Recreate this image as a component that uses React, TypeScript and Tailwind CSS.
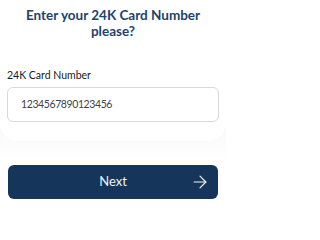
import { ArrowRight } from "lucide-react";

export default function App() {
  return (
    <div
      className="w-[226px] h-[214px] bg-white overflow-hidden"
      style={{ fontFamily: "Lato, 'Noto Sans', sans-serif" }}
    >
      <div className="bg-gradient-to-b from-[#e9e9e9] via-[#f3f3f3] to-white">
        {/* card */}
        <div className="bg-white rounded-b-[18px] px-[7px] pt-[7px] pb-[19px]">
          <h1 className="text-center text-[13.5px] leading-[16px] font-bold text-[#21436a]">
            Enter your 24K Card Number
            <br />
            please?
          </h1>
          <label className="block mt-[29px] text-[10.5px] leading-[14px] text-[#1a1a1a]">
            24K Card Number
          </label>
          <div className="mt-[5px] h-[35px] rounded-[6px] border border-[#d9d9d9] flex items-center px-[13px]">
            <span className="text-[10.5px] text-[#444] tracking-[-0.4px]">1234567890123456</span>
          </div>
        </div>
        <div className="h-[24px]" />
      </div>
      <div className="px-[8px]">
        <button className="w-full h-[34px] rounded-[6px] bg-[#15365a] text-[#f1f4f8] flex items-center justify-center relative">
          <span className="text-[13px] font-normal">Next</span>
          <ArrowRight className="absolute right-[8px] w-[20px] h-[20px]" strokeWidth={1.4} />
        </button>
      </div>
    </div>
  );
}
